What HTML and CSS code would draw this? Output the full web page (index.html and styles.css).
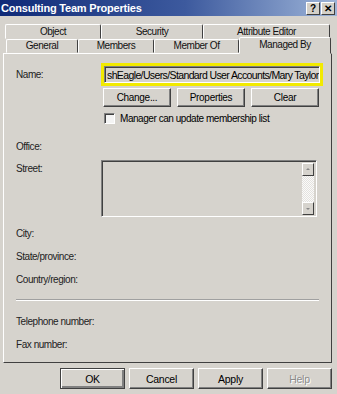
FILE: index.html
```html
<!DOCTYPE html>
<html lang="en">
<head>
  <meta charset="UTF-8">
  <title>Consulting Team Properties</title>
  <link rel="stylesheet" href="styles.css">
</head>
<body>

  <div class="window">
    <div class="titlebar">
      <span class="title">Consulting Team Properties</span>
      <div class="tbtns">
        <span class="tbtn">?</span>
        <span class="tbtn">&#x2715;</span>
      </div>
    </div>

    <div class="tabs">
      <div class="tabrow back">
        <div class="tab w-object">Object</div>
        <div class="tab w-security">Security</div>
        <div class="tab w-attr">Attribute Editor</div>
      </div>
      <div class="tabrow front">
        <div class="tab w-general">General</div>
        <div class="tab w-members">Members</div>
        <div class="tab w-memberof">Member Of</div>
        <div class="tab w-managed active">Managed By</div>
      </div>
    </div>

    <div class="panel">
      <div class="row name-row">
        <label class="lbl">Name:</label>
        <div class="highlight">
          <div class="field"><span>shEagle/Users/Standard User Accounts/Mary Taylor</span><span class="caret"></span></div>
        </div>
      </div>

      <div class="row btn-row">
        <button class="btn">Change...</button>
        <button class="btn">Properties</button>
        <button class="btn">Clear</button>
      </div>

      <div class="row check-row">
        <span class="checkbox"></span>
        <span>Manager can update membership list</span>
      </div>

      <div class="row line office"><span class="lbl">Office:</span></div>

      <div class="row street-row">
        <span class="lbl">Street:</span>
        <div class="textarea">
          <div class="scroll">
            <span class="arrow up"></span>
            <span class="track"></span>
            <span class="arrow down"></span>
          </div>
        </div>
      </div>

      <div class="row line city"><span class="lbl">City:</span></div>
      <div class="row line"><span class="lbl">State/province:</span></div>
      <div class="row line"><span class="lbl">Country/region:</span></div>

      <div class="sep"></div>

      <div class="row line phone"><span class="lbl">Telephone number:</span></div>
      <div class="row line"><span class="lbl">Fax number:</span></div>
    </div>

    <div class="footer">
      <button class="btn dlg default">OK</button>
      <button class="btn dlg">Cancel</button>
      <button class="btn dlg">Apply</button>
      <button class="btn dlg disabled">Help</button>
    </div>
  </div>

</body>
</html>
```

FILE: styles.css
```css
body {
  margin: 0;
  font-family: "Liberation Sans", Arial, sans-serif;
  font-size: 10px;
  letter-spacing: -0.45px;
  color: #000;
  background: #d4d0c8;
}
.window {
  width: 337px;
  height: 394px;
  background: #d6d3cd;
  overflow: hidden;
}

/* title bar */
.titlebar {
  height: 16px;
  display: flex;
  align-items: center;
  justify-content: space-between;
  background: linear-gradient(to right, #0f2a78, #3d5a9e 55%, #9db4d8);
  padding: 0 2px 0 1px;
}
.title {
  color: #fff;
  font-weight: bold;
  font-size: 11px;
  letter-spacing: -0.2px;
}
.tbtns { display: flex; gap: 1px; }
.tbtn {
  width: 12px;
  height: 11px;
  background: #d4d0c8;
  border: 1px solid;
  border-color: #fff #404040 #404040 #fff;
  font-size: 10px;
  font-weight: bold;
  line-height: 11px;
  text-align: center;
  letter-spacing: 0;
}

/* tabs */
.tabs {
  margin-top: 8px;
  padding-left: 5px;
}
.tabrow { display: flex; height: 15px; }
.tabrow.front { height: 14px; }
.tab {
  box-sizing: border-box;
  height: 15px;
  border: 1px solid;
  border-color: #fff #404040 transparent #fff;
  border-radius: 2px 2px 0 0;
  text-align: center;
  line-height: 13px;
  color: #111;
}
.front .tab { height: 14px; line-height: 12px; }
.w-object { width: 96px; }
.w-security { width: 102px; }
.w-attr { width: 127px; }
.w-general { width: 72px; margin-left: 1px; }
.w-members { width: 76px; }
.w-memberof { width: 85px; }
.w-managed { width: 92px; }
.front .tab.active {
  height: 17px;
  margin-top: -2px;
  position: relative;
  z-index: 2;
  background: #d6d3cd;
  line-height: 14px;
}

/* panel */
.panel {
  margin: 0 5px 0 3px;
  box-sizing: border-box;
  height: 310px;
  border: 1px solid;
  border-color: #fff #404040 #404040 #fff;
  padding: 9px 0 0 12px;
}
.row { display: flex; align-items: center; }
.lbl { width: 85px; flex: none; color: #222; white-space: nowrap; }
.name-row { height: 23px; }
.highlight {
  box-sizing: border-box;
  width: 222px;
  height: 23px;
  border: 3px solid #f2ea00;
}
.field {
  box-sizing: border-box;
  height: 17px;
  display: flex;
  align-items: center;
  border: 1px solid;
  border-color: #808080 #fff #fff #808080;
  box-shadow: inset 1px 1px #404040;
  background: #d6d3cd;
  padding-left: 2px;
  white-space: nowrap;
  overflow: hidden;
  font-size: 10.5px;
  letter-spacing: -0.62px;
}
.caret {
  flex: none;
  width: 1px;
  height: 11px;
  margin-left: 0;
  background: #000;
}
.btn {
  font-family: inherit;
  font-size: 10px;
  letter-spacing: -0.3px;
  color: #000;
  background: #d6d3cd;
  border: 1px solid;
  border-color: #fff #404040 #404040 #fff;
  box-shadow: inset -1px -1px #808080;
  padding: 0;
}
.btn-row {
  margin-top: 2px;
  padding-left: 87px;
  gap: 6px;
}
.btn-row .btn { width: 68px; height: 19px; }
.check-row {
  margin-top: 5px;
  padding-left: 88px;
  gap: 5px;
  height: 13px;
}
.checkbox {
  box-sizing: border-box;
  width: 11px;
  height: 11px;
  border: 1px solid;
  border-color: #808080 #fff #fff #808080;
  box-shadow: inset 1px 1px #404040;
  background: #f4f4f4;
}
.line { height: 14px; }
.office { margin-top: 14px; }
.street-row {
  margin-top: 7px;
  align-items: flex-start;
}
.street-row .lbl { padding-top: 3px; }
.textarea {
  box-sizing: border-box;
  width: 216px;
  height: 57px;
  border: 1px solid;
  border-color: #808080 #fff #fff #808080;
  box-shadow: inset 1px 1px #404040;
  display: flex;
  justify-content: flex-end;
  padding: 2px 2px 1px 0;
}
.scroll {
  width: 12px;
  display: flex;
  flex-direction: column;
}
.arrow {
  box-sizing: border-box;
  height: 13px;
  background: #d6d3cd;
  border: 1px solid;
  border-color: #fff #404040 #404040 #fff;
  position: relative;
}
.arrow::after {
  content: "";
  position: absolute;
  left: 3px;
  border-left: 2px solid transparent;
  border-right: 2px solid transparent;
}
.arrow.up::after { top: 4px; border-bottom: 2px solid #888; }
.arrow.down::after { top: 5px; border-top: 2px solid #888; }
.track {
  flex: 1;
  background: repeating-conic-gradient(#fafafa 0 25%, #e4e2de 0 50%) 0 0 / 2px 2px;
}
.city { margin-top: 9px; }
.row.line + .row.line { margin-top: 9px; }
.sep {
  margin: 13px 12px 0 0;
  border-top: 1px solid #a0a0a0;
  border-bottom: 1px solid #fff;
}
.phone { margin-top: 13px; }

/* dialog buttons */
.footer {
  display: flex;
  justify-content: flex-end;
  gap: 4px;
  padding: 5px 5px 0 0;
}
.btn.dlg { width: 65px; height: 21px; font-size: 10.5px; }
.btn.default { border-color: #404040; box-shadow: inset 1px 1px #fff, inset -2px -2px #808080; }
.btn.disabled { color: #8c8c8c; text-shadow: 1px 1px #fff; }
```
